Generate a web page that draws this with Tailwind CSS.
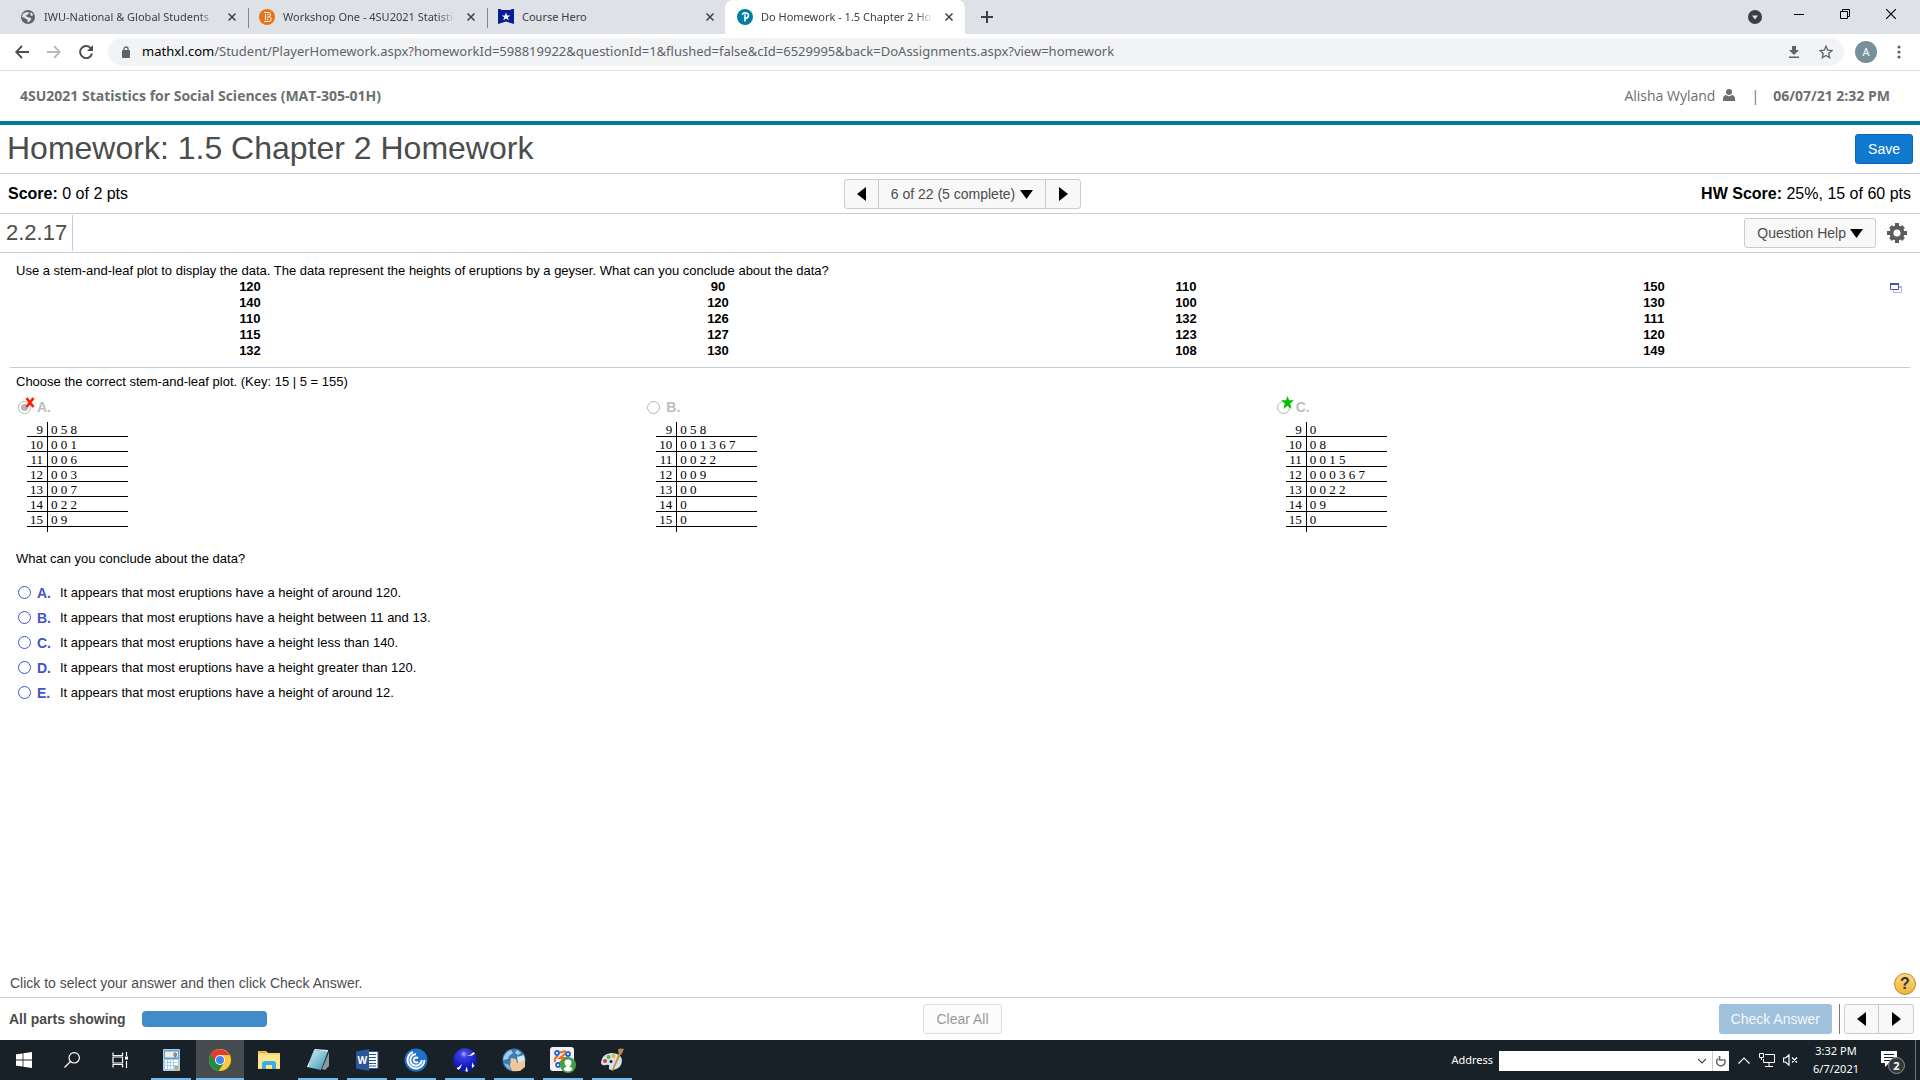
<!DOCTYPE html>
<html lang="en">
<head>
  <meta charset="UTF-8">
  <title>Do Homework - 1.5 Chapter 2 Homework</title>
  <meta name="viewport" content="width=device-width, initial-scale=1.0">
  <script src="https://cdn.jsdelivr.net/npm/@tailwindcss/browser@4"></script>
</head>
<body class="bg-white font-['Liberation_Sans',sans-serif] text-black min-h-screen flex flex-col">

  <!-- Browser tab strip -->
  <div class="flex h-[34px] bg-[#dee1e6] font-['Noto_Sans',sans-serif] text-[11px] text-[#3c4043]">
    <div class="flex items-center w-[248px] pl-5 pr-2 gap-2">
      <svg class="w-4 h-4 shrink-0" viewBox="0 0 16 16"><circle cx="8" cy="8" r="7" fill="#5f6368"/><path d="M3 4.500 6.500 3l3 .5L8 5.500 6 6.500l1 1.500 3 .5 1.500 1.500-2 2.500-2 1V11L5.500 9.500 2 8M11 3l2.500 3-2 1-1.500-1.500z" fill="#dee1e6"/></svg>
      <span class="w-[172px] overflow-hidden whitespace-nowrap mask-r-from-90%">IWU-National &amp; Global Students</span>
      <button aria-label="Close tab" class="w-4 h-4 flex items-center justify-center"><svg class="w-2 h-2" viewBox="0 0 8 8"><path d="M.5.5l7 7M7.500.5l-7 7" stroke="#3c4043" stroke-width="1.500"/></svg></button>
    </div>
    <div class="flex items-center w-[239px] pl-[11px] pr-2 gap-2 relative before:absolute before:left-0 before:top-2 before:h-5 before:w-px before:bg-[#80868b]">
      <svg class="w-4 h-4 shrink-0" viewBox="0 0 16 16"><circle cx="8" cy="8" r="8" fill="#ea7317"/><path d="M5 3.500h4a2 2 0 0 1 1 4 2.500 2.500 0 0 1-.5 5H5M6.500 5v6M8 5.500h1.500M8 8h2M8 10.500h1.500" fill="none" stroke="#fff"/></svg>
      <span class="w-[176px] overflow-hidden whitespace-nowrap mask-r-from-90%">Workshop One - 4SU2021 Statistics</span>
      <button aria-label="Close tab" class="w-4 h-4 flex items-center justify-center"><svg class="w-2 h-2" viewBox="0 0 8 8"><path d="M.5.5l7 7M7.500.5l-7 7" stroke="#3c4043" stroke-width="1.500"/></svg></button>
    </div>
    <div class="flex items-center w-[238px] pl-[11px] pr-[7px] gap-2 relative before:absolute before:left-0 before:top-2 before:h-5 before:w-px before:bg-[#80868b]">
      <svg class="w-4 h-4 shrink-0" viewBox="0 0 16 16"><path d="M0 0h2.500l1 1h9l1-1H16v15l-8-2.500L0 15z" fill="#0b1d96"/><path d="M8 3.500l1.200 3h3L9.800 8.300l.9 3L8 9.500l-2.700 1.800.9-3L3.800 6.500h3z" fill="#fff"/></svg>
      <span class="flex-1 whitespace-nowrap">Course Hero</span>
      <button aria-label="Close tab" class="w-4 h-4 flex items-center justify-center"><svg class="w-2 h-2" viewBox="0 0 8 8"><path d="M.5.5l7 7M7.500.5l-7 7" stroke="#3c4043" stroke-width="1.500"/></svg></button>
    </div>
    <div class="flex items-center w-[240px] pl-3 pr-2 gap-2 bg-white rounded-t-lg">
      <svg class="w-4 h-4 shrink-0" viewBox="0 0 16 16"><circle cx="8" cy="8" r="8" fill="#007fa3"/><path d="M5 5.500C7 3 11.500 3.500 11.500 6.500c0 2-2 3-4 2.500M8 5.500v7" fill="none" stroke="#fff" stroke-width="1.600"/></svg>
      <span class="w-[176px] overflow-hidden whitespace-nowrap mask-r-from-90%">Do Homework - 1.5 Chapter 2 Homework</span>
      <button aria-label="Close tab" class="w-4 h-4 flex items-center justify-center"><svg class="w-2 h-2" viewBox="0 0 8 8"><path d="M.5.5l7 7M7.500.5l-7 7" stroke="#3c4043" stroke-width="1.500"/></svg></button>
    </div>
    <button aria-label="New tab" class="w-11 flex items-center justify-center"><svg class="w-3 h-3" viewBox="0 0 12 12"><path d="M6 0v12M0 6h12" stroke="#3c4043" stroke-width="2"/></svg></button>
    <div class="ml-auto flex items-center">
      <button aria-label="Search tabs" class="w-[30px] flex justify-center"><svg class="w-[14px] h-[14px]" viewBox="0 0 14 14"><circle cx="7" cy="7" r="7" fill="#3c4043"/><path d="M4 5.500h6L7 9.500z" fill="#dee1e6"/></svg></button>
      <button aria-label="Minimize" class="w-[58px] h-[34px] pb-[6px] flex items-center justify-center"><svg class="w-[10px] h-[10px]" viewBox="0 0 10 10"><path d="M0 5.500h10" stroke="#000"/></svg></button>
      <button aria-label="Restore" class="w-[34px] h-[34px] pb-[6px] flex items-center justify-center"><svg class="w-[10px] h-[10px]" viewBox="0 0 10 10"><path d="M.5 2.500h7v7h-7zM2.500 2.500v-2h7v7h-2" fill="none" stroke="#000"/></svg></button>
      <button aria-label="Close" class="w-[58px] h-[34px] pb-[6px] flex items-center justify-center"><svg class="w-[10px] h-[10px]" viewBox="0 0 10 10"><path d="M0 0l10 10M10 0L0 10" stroke="#000" stroke-width="1.200"/></svg></button>
    </div>
  </div>

  <!-- Toolbar -->
  <div class="flex items-center h-[37px] border-b border-[#dadce0]">
    <button aria-label="Back" class="w-8 ml-[6px] flex justify-center"><svg class="w-[14px] h-[14px]" viewBox="0 0 14 14"><path d="M14 7H1.500M7 1L1.200 7 7 13" fill="none" stroke="#4a4d51" stroke-width="1.800"/></svg></button>
    <button aria-label="Forward" class="w-8 flex justify-center"><svg class="w-[14px] h-[14px]" viewBox="0 0 14 14"><path d="M0 7h12.500M7 1l5.800 6L7 13" fill="none" stroke="#b9bbbe" stroke-width="1.800"/></svg></button>
    <button aria-label="Reload" class="w-8 flex justify-center"><svg class="w-[14px] h-[14px]" viewBox="0 0 14 14"><path d="M12 3.500A6 6 0 1 0 13 8.500" fill="none" stroke="#4a4d51" stroke-width="1.900"/><path d="M14 0v6H8z" fill="#4a4d51"/></svg></button>
    <div class="flex-1 ml-[6px] h-7 bg-[#f1f3f4] rounded-full flex items-center pl-[13px] pr-[11px]">
      <svg class="w-[10px] h-3 mr-[11px]" viewBox="0 0 10 12"><rect y="4" x="1" width="8" height="8" rx="1" fill="#5f6368"/><path d="M3 5V3a2 2 0 0 1 4 0v2" fill="none" stroke="#5f6368" stroke-width="1.300"/></svg>
      <span class="font-['Noto_Sans',sans-serif] text-[13px] text-[#5f6368] whitespace-nowrap flex-1"><span class="text-black">mathxl.com</span>/Student/PlayerHomework.aspx?homeworkId=598819922&amp;questionId=1&amp;flushed=false&amp;cId=6529995&amp;back=DoAssignments.aspx?view=homework</span>
      <button aria-label="Downloads" class="mr-5"><svg class="w-[10px] h-[12px]" viewBox="0 0 10 12"><path d="M3 0h4v4h3L5 9 0 4h3zM0 10.500h10V12H0z" fill="#5f6368"/></svg></button>
      <button aria-label="Bookmark"><svg class="w-[14px] h-[14px]" viewBox="0 0 14 14"><path d="M7 1.200l1.700 4 4.300.4-3.300 2.900 1 4.200L7 10.500l-3.700 2.200 1-4.200L1 5.600l4.300-.4z" fill="none" stroke="#5f6368" stroke-width="1.300"/></svg></button>
    </div>
    <button class="ml-[11px] w-[22px] h-[22px] rounded-full bg-[#78909c] text-white text-[11px] font-['Noto_Sans',sans-serif]">A</button>
    <button aria-label="Menu" class="w-[43px] flex justify-center"><svg class="w-1 h-[14px]" viewBox="0 0 4 14"><g fill="#5f6368"><circle cx="2" cy="2" r="1.600"/><circle cx="2" cy="7" r="1.600"/><circle cx="2" cy="12" r="1.600"/></g></svg></button>
  </div>

  <!-- Course header -->
  <header class="flex items-center justify-between h-[54px] border-b-4 border-[#007a9c] pl-5 pr-[30px] pb-[2px] font-['Open_Sans',sans-serif] text-[14px] text-[#6a7070]">
    <span class="font-bold">4SU2021 Statistics for Social Sciences (MAT-305-01H)</span>
    <div class="flex items-center">
      <span>Alisha Wyland</span>
      <svg class="w-3 h-3 ml-2 mr-4" viewBox="0 0 12 12"><circle cx="6" cy="3" r="3" fill="#6a7070"/><path d="M0 12V9.500C0 7 2 6 3.200 6a4 4 0 0 0 5.600 0C10 6 12 7 12 9.500V12z" fill="#6a7070"/></svg>
      <span class="mr-[14px]">|</span>
      <span class="font-bold">06/07/21 2:32 PM</span>
    </div>
  </header>

  <!-- Assignment title -->
  <div class="flex items-center justify-between h-[49px] border-b border-[#c8cbdc] pl-[7px] pr-[7px]">
    <h1 class="text-[32px] leading-9 pb-[2px] text-[#4c4c4c]">Homework: 1.5 Chapter 2 Homework</h1>
    <button class="h-[30px] px-3 rounded-[3px] border border-[#0d66b5] bg-[#0f79d0] text-white text-[14px]">Save</button>
  </div>

  <div class="grid grid-cols-[1fr_auto_1fr] items-center h-10 border-b border-[#c8cbdc] pl-2 pr-[9px] text-[16px]">
    <span><b>Score:</b> 0 of 2 pts</span>
    <div class="flex h-[30px] ml-[6px] border border-[#ccc] rounded-[3px] bg-[#f8f8f8] text-[14px] text-[#4c4c4c] divide-x divide-[#ccc]">
      <button aria-label="Previous question" class="w-[34px] flex items-center justify-center"><svg class="w-[9px] h-[14px]" viewBox="0 0 9 14"><path d="M9 0v14L0 7z"/></svg></button>
      <button class="px-3 pt-px flex items-center gap-[5px]">6 of 22 (5 complete)<svg class="w-[13px] h-[9px]" viewBox="0 0 13 9"><path d="M0 0h13L6.500 9z"/></svg></button>
      <button aria-label="Next question" class="w-[34px] flex items-center justify-center"><svg class="w-[9px] h-[14px]" viewBox="0 0 9 14"><path d="M0 0v14l9-7z"/></svg></button>
    </div>
    <span class="text-right"><b>HW Score:</b> 25%, 15 of 60 pts</span>
  </div>

  <div class="flex items-center h-[39px] border-b border-[#c8cbdc] pr-[13px]">
    <h2 class="h-9 leading-9 w-[73px] pl-[6px] border-r border-[#c8cbdc] text-[22px] text-[#4c4c4c]">2.2.17</h2>
    <button class="ml-auto h-[30px] px-3 border border-[#ccc] rounded-[3px] bg-[#f8f8f8] text-[14px] text-[#4c4c4c] flex items-center gap-1">Question Help<svg class="w-[13px] h-[9px]" viewBox="0 0 13 9"><path d="M0 0h13L6.500 9z"/></svg></button>
    <button aria-label="Settings" class="ml-[11px] pb-px">
      <svg class="w-5 h-5" viewBox="0 0 20 20"><g fill="#5c5c5c"><path d="M8 0h4v4H8zM8 16h4v4H8zM0 8h4v4H0zM16 8h4v4h-4z"/><path d="M8 .8h4v4H8zM8 15.200h4v4H8zM.8 8h4v4h-4zM15.200 8h4v4h-4z" transform="rotate(45 10 10)"/></g><circle cx="10" cy="10" r="5.500" fill="none" stroke="#5c5c5c" stroke-width="4"/></svg>
    </button>
  </div>

  <!-- Question -->
  <main class="flex-1 pt-[10px] text-[13px] leading-4">
    <p class="px-4">Use a stem-and-leaf plot to display the data. The data represent the heights of eruptions by a geyser. What can you conclude about the data?</p>
    <div class="flex items-start gap-[2px] pl-4 pr-[18px]">
      <table class="flex-1 table-fixed w-full text-center font-bold">
        <tbody id="heights"></tbody>
      </table>
      <button aria-label="Open data in a new window" class="mt-1 shrink-0"><svg class="w-3 h-[10px]" viewBox="0 0 12 10"><path d="M3.500 3.500h8v6h-8z" fill="#fff" stroke="#b4b5de"/><path d="M3 3h9v2H3z" fill="#b4b5de"/><path d="M.5.5h8v6h-8z" fill="#fff" stroke="#4a55a5"/><path d="M0 0h9v2H0z" fill="#4a55a5"/></svg></button>
    </div>
    <hr class="mt-2 mx-[10px] border-[#c8cbdc]">

    <p class="mt-[6px] px-4">Choose the correct stem-and-leaf plot. (Key: 15 | 5 = 155)</p>
    <div id="plots" class="grid grid-cols-3 mt-[9px] px-4"></div>

    <p class="mt-[19px] px-4">What can you conclude about the data?</p>
    <div id="answers" class="mt-[13px] px-[18px]"></div>
  </main>

  <!-- Footer -->
  <div class="flex items-center justify-between h-7 pl-[10px] pr-1 border-b border-[#c8cbdc] text-[14px] text-[#4c4c4c]">
    <p>Click to select your answer and then click Check Answer.</p>
    <button aria-label="Help" class="w-[22px] h-[22px] rounded-full border border-[#b98d2e] bg-linear-to-b from-[#fbdc7c] to-[#efb23c] text-[16px] leading-5 font-bold text-[#333]">?</button>
  </div>
  <div class="grid grid-cols-[1fr_auto_1fr] items-center h-[42px] pl-[9px] pr-[6px] text-[14px] text-[#4c4c4c]">
    <div class="flex items-center gap-4">
      <span class="font-bold">All parts showing</span>
      <div class="w-[125px] h-4 rounded-[4px] bg-[#428bca]"></div>
    </div>
    <button disabled class="h-[30px] px-3 ml-[2px] border border-[#ddd] rounded-[3px] bg-[#fcfcfc] text-[#999]">Clear All</button>
    <div class="flex items-center justify-end">
      <button disabled class="h-[30px] px-3 rounded-[3px] bg-[#9fc1dc] text-[#f4f8fb]">Check Answer</button>
      <span class="w-px h-[30px] bg-[#777] ml-[7px] mr-1"></span>
      <div class="flex h-[30px] border border-[#ccc] rounded-[3px] bg-[#f8f8f8] divide-x divide-[#ccc]">
        <button aria-label="Previous" class="w-[34px] flex items-center justify-center"><svg class="w-[9px] h-[14px]" viewBox="0 0 9 14"><path d="M9 0v14L0 7z"/></svg></button>
        <button aria-label="Next" class="w-[34px] flex items-center justify-center"><svg class="w-[9px] h-[14px]" viewBox="0 0 9 14"><path d="M0 0v14l9-7z"/></svg></button>
      </div>
    </div>
  </div>

  <!-- Windows taskbar -->
  <footer class="flex h-10 bg-[#182127] text-white font-['Noto_Sans',sans-serif] text-[11px]">
    <button aria-label="Start" class="w-12 flex items-center justify-center"><svg class="w-4 h-4" viewBox="0 0 16 16"><path d="M0 2.300l6.600-.9v6.200H0zM7.400 1.200L16 0v7.600H7.400zM0 8.400h6.600v6.200L0 13.700zM7.400 8.400H16V16l-8.600-1.200z" fill="#fff"/></svg></button>
    <button aria-label="Search" class="w-12 flex items-center justify-center"><svg class="w-4 h-4" viewBox="0 0 16 16"><circle cx="10.200" cy="5.800" r="5.200" fill="none" stroke="#fff" stroke-width="1.200"/><path d="M6.500 9.500L.5 15.500" stroke="#fff" stroke-width="1.300"/></svg></button>
    <button aria-label="Task view" class="w-12 mr-[3px] flex items-center justify-center"><svg class="w-4 h-4" viewBox="0 0 16 16"><g fill="none" stroke="#fff"><path d="M1 .5v3h9.500v-3M1 15.500v-3h9.500v3M1 5h9.500v6H1z" stroke-width="1.200"/><path d="M14.500 0v4M14.500 9v7" stroke-width="1.200"/></g><path d="M13 4.500h3v3h-3z" fill="#fff"/></svg></button>
    <div class="flex gap-px">
      <button aria-label="Calculator" class="w-12 flex items-center justify-center relative after:absolute after:bottom-0 after:inset-x-1 after:h-[2px] after:bg-[#76b9ed]">
        <svg class="w-6 h-6" viewBox="0 0 24 24"><rect x="4" y="1" width="17" height="22" rx="1" fill="#a9cfe9"/><rect x="5" y="2" width="15" height="9" fill="#5b9fd4"/><rect x="6" y="3.500" width="13" height="6" fill="#f5ecd5"/><path d="M15 5h2v3h-2v-3M17 5v4h-2" stroke="#5b7690" fill="none"/><g fill="#fff"><path d="M6 12h2v2H6zM9 12h2v2H9zM12 12h2v2h-2zM15 12h4v2h-4zM6 15h2v2H6zM9 15h2v2H9zM12 15h2v2h-2zM15 15h4v2h-4zM6 18h2v3H6zM9 18h2v3H9zM12 18h2v3h-2z"/></g><path d="M16 18h3v3.500h-3z" fill="#f39a2d"/></svg>
      </button>
      <button aria-label="Chrome" class="w-12 flex items-center justify-center bg-[#464d51] relative after:absolute after:bottom-0 after:inset-x-0 after:h-[2px] after:bg-[#76b9ed]">
        <svg class="w-[22px] h-[22px]" viewBox="0 0 22 22"><circle cx="11" cy="11" r="11" fill="#fcc934"/><path d="M11 11L1.500 5.500A11 11 0 0 0 9.500 21.900L15.500 13z" fill="#1e8e3e"/><path d="M11 11L6.600 13.500 1.500 5.500A11 11 0 0 1 20.500 6H11z" fill="#e33b2e"/><circle cx="11" cy="11" r="5" fill="#fff"/><circle cx="11" cy="11" r="4" fill="#4285f4"/></svg>
      </button>
      <button aria-label="File Explorer" class="w-12 flex items-center justify-center">
        <svg class="w-6 h-6" viewBox="0 0 24 24"><path d="M1 3h8l2 2h12v16H1z" fill="#f7d774"/><path d="M1 7h22v13H1z" fill="#fde68e"/><path d="M2 3.500h7v1.500H2z" fill="#e5a823"/><path d="M5 21v-5q0-3 3-3h8q3 0 3 3v5h-4v-4H9v4z" fill="#35b0e8"/></svg>
      </button>
      <button aria-label="Notepad" class="w-12 flex items-center justify-center relative after:absolute after:bottom-0 after:inset-x-1 after:h-[2px] after:bg-[#76b9ed]">
        <svg class="w-6 h-6" viewBox="0 0 24 24"><defs><linearGradient id="note" x1="0" y1="0" x2="1" y2="1"><stop stop-color="#d9f2f7"/><stop offset="1" stop-color="#2f96ae"/></linearGradient></defs><path d="M16 21l7-17v14l-4 4z" fill="#8c9aa0"/><path d="M8 2l14 1-7 19-14-3z" fill="url(#note)"/><path d="M8 2l1-1 13 1v1.500z" fill="#e8eef0"/><path d="M1 19l3-6-1.500 6z" fill="#fff"/></svg>
      </button>
      <button aria-label="Word" class="w-12 flex items-center justify-center relative after:absolute after:bottom-0 after:inset-x-1 after:h-[2px] after:bg-[#76b9ed]">
        <svg class="w-6 h-6" viewBox="0 0 24 24"><path d="M13 3.500h10v17H13z" fill="#fff" stroke="#2b579a"/><path d="M14 6.500h7M14 9.500h7M14 12.500h7M14 15.500h7M14 18h7" stroke="#2b579a"/><path d="M1 3.500L14 1v22L1 20.500z" fill="#2b579a"/><text x="2.500" y="16" font-size="10" font-weight="bold" fill="#fff">W</text></svg>
      </button>
      <button aria-label="Citrix" class="w-12 flex items-center justify-center relative after:absolute after:bottom-0 after:inset-x-1 after:h-[2px] after:bg-[#76b9ed]">
        <svg class="w-6 h-6" viewBox="0 0 24 24"><circle cx="12" cy="12" r="11.500" fill="#1f70c8"/><g fill="none" stroke="#fff" stroke-width="2"><path d="M9 4A8.500 8.500 0 1 0 20.500 12M12 3.500"/><path d="M12 6.300A5.700 5.700 0 1 0 17.700 12"/><path d="M14 10.300a2.500 2.500 0 1 0 0 3.400"/></g></svg>
      </button>
      <button aria-label="Sphere" class="w-12 flex items-center justify-center relative after:absolute after:bottom-0 after:inset-x-1 after:h-[2px] after:bg-[#76b9ed]">
        <svg class="w-6 h-6" viewBox="0 0 24 24"><defs><radialGradient id="ball" cx="0.45" cy="0.25" r="0.6"><stop offset="0" stop-color="#b9a8ff"/><stop offset="0.25" stop-color="#3f3fe8"/><stop offset="1" stop-color="#0d18b0"/></radialGradient></defs><circle cx="12" cy="12" r="11.800" fill="url(#ball)"/><path d="M14 8q4-1 6.500-4l1.500 1.500q-3 3-8 2.500zM3.500 20q3-1 5.500-4-1 4-3.500 6zM12.500 23.500q0-3 1.500-5 0 3 1 5zM19 20q-.5-3 .5-6 0 2 2 4z" fill="#fff"/></svg>
      </button>
      <button aria-label="Globe" class="w-12 flex items-center justify-center relative after:absolute after:bottom-0 after:inset-x-1 after:h-[2px] after:bg-[#76b9ed]">
        <svg class="w-6 h-6" viewBox="0 0 24 24"><circle cx="12" cy="12" r="11.500" fill="#3c7bb3"/><path d="M2 8q3-5 7-6l2 3-4 3-1 3-5 1zM15 2l4 3-3 2-3-2z" fill="#a5cbe2"/><path d="M9 10l5 1 1 4 8-2v6l-5 4h-8l-2-5z" fill="#f3c794"/><path d="M15 9l7-2 1 6-7 2z" fill="#dbe6ea"/><path d="M2 15l5 2 2 5q-5-2-7-7z" fill="#8fc0de"/></svg>
      </button>
      <button aria-label="Network app" class="w-12 flex items-center justify-center relative after:absolute after:bottom-0 after:inset-x-1 after:h-[2px] after:bg-[#76b9ed]">
        <svg class="w-[26px] h-[26px]" viewBox="0 0 26 26"><rect width="24" height="24" rx="3" fill="#f1f2f5"/><path d="M8 9q-4 2-3 6M8 6l8-2M16 6l-6 5h7M9 17l5-6" fill="none" stroke="#f46c1b" stroke-width="2"/><g fill="#fff" stroke="#2463d4" stroke-width="1.800"><circle cx="7" cy="6" r="2"/><circle cx="18" cy="7" r="2"/><circle cx="8" cy="18" r="2"/></g><circle cx="18" cy="18" r="8" fill="#43a047"/><path d="M13.500 22.500q.5-2.500 3.200-3-2.200-1-2.200-3.700 0-3.300 3.500-3.300t3.500 3.300q0 2.700-2.200 3.700 2.700.5 3.200 3-2 2-4.500 2t-4.500-2z" fill="#fff"/></svg>
      </button>
      <button aria-label="Paint" class="w-12 flex items-center justify-center relative after:absolute after:bottom-0 after:inset-x-1 after:h-[2px] after:bg-[#76b9ed]">
        <svg class="w-6 h-6" viewBox="0 0 24 24"><path d="M1 14q1-8 10-9 10 0 11 7 0 9-10 10-4 0-3-3 1-3-3-2-5 1-5-3z" fill="#cfe3f0"/><circle cx="5" cy="13" r="2" fill="#dd3c33"/><circle cx="8.500" cy="9" r="2" fill="#59b146"/><circle cx="13.500" cy="8" r="2" fill="#f1b62f"/><circle cx="11" cy="13.500" r="1.500" fill="#182127"/><path d="M19 5l2 1-8 17-1.500-.5z" fill="#e08a2c"/><path d="M18 1q3-1 6 0l-2.500 5.500L18.500 5z" fill="#b98560"/></svg>
      </button>
    </div>

    <div class="ml-auto flex items-center">
      <label for="address" class="mr-[6px]">Address</label>
      <div class="flex w-[230px] h-5 mt-[2px] bg-white">
        <input id="address" type="text" class="flex-1 min-w-0 text-black outline-none">
        <button aria-label="Show addresses" class="w-5 flex items-center justify-center"><svg class="w-2 h-[6px]" viewBox="0 0 8 6"><path d="M0 1l4 4 4-4" fill="none" stroke="#444" stroke-width="1.200"/></svg></button>
        <button aria-label="Refresh" class="w-[17px] border-l border-[#ccc] flex items-center justify-center"><svg class="w-[10px] h-3" viewBox="0 0 10 12"><path d="M1.800 3.800A4.200 4.200 0 1 0 8.200 4.200M3.500 1v4H7.500" fill="none" stroke="#666" stroke-width="1.600"/></svg></button>
      </div>
      <button aria-label="Show hidden icons" class="w-[29px] flex justify-center"><svg class="w-3 h-[7px]" viewBox="0 0 12 7"><path d="M.5 6.500L6 1l5.500 5.500" fill="none" stroke="#fff" stroke-width="1.200"/></svg></button>
      <button aria-label="Network" class="ml-px w-4"><svg class="w-4 h-[14px]" viewBox="0 0 16 14"><path d="M6 1.500h9.500v8H4.500V6M10 9.500v4M6 13.500h8M.5.5h4v4h-4zM2.500 4.500v2.500" fill="none" stroke="#fff"/></svg></button>
      <button aria-label="Volume" class="ml-2 w-[15px]"><svg class="w-[15px] h-3" viewBox="0 0 15 12"><path d="M.5 4h2L6 .8v10.400L2.500 8h-2zM9 3.500l5 5M14 3.500l-5 5" fill="none" stroke="#fff" stroke-width="1.200"/></svg></button>
      <div class="w-[76px] text-center leading-[18px]">3:32 PM<br>6/7/2021</div>
      <button aria-label="2 notifications" class="relative w-6 h-6 ml-[6px] mr-[11px]">
        <svg class="w-6 h-6" viewBox="0 0 24 24"><path d="M1 3h16v12H9l-4 4v-4H1z" fill="#fff"/><path d="M4 6.500h10M4 9.500h10M4 12.500h7" stroke="#182127"/></svg>
        <span class="absolute left-2 top-[9px] w-[17px] h-[17px] rounded-full border border-[#8b9094] bg-[#33383b] leading-[15px] text-[11px] font-bold">2</span>
      </button>
      <span class="w-px h-10 bg-[#6d7377] mr-1"></span>
    </div>
  </footer>

  <script>
    const heights = [
      [120, 90, 110, 150],
      [140, 120, 100, 130],
      [110, 126, 132, 111],
      [115, 127, 123, 120],
      [132, 130, 108, 149]
    ];

    const stems = [9, 10, 11, 12, 13, 14, 15];
    const plots = [
      { letter: "A", mark: "wrong", leaves: ["0 5 8", "0 0 1", "0 0 6", "0 0 3", "0 0 7", "0 2 2", "0 9"] },
      { letter: "B", mark: "", leaves: ["0 5 8", "0 0 1 3 6 7", "0 0 2 2", "0 0 9", "0 0", "0", "0"] },
      { letter: "C", mark: "right", leaves: ["0", "0 8", "0 0 1 5", "0 0 0 3 6 7", "0 0 2 2", "0 9", "0"] }
    ];

    const answers = [
      "It appears that most eruptions have a height of around 120.",
      "It appears that most eruptions have a height between 11 and 13.",
      "It appears that most eruptions have a height less than 140.",
      "It appears that most eruptions have a height greater than 120.",
      "It appears that most eruptions have a height of around 12."
    ];

    // Marks drawn over the radio once the part has been graded
    const marks = {
      wrong: `<svg class="absolute left-[7px] -top-[2px] w-[10px] h-[11px]" viewBox="0 0 10 11"><path d="M1.500 1l7 9M8.500 1l-7 9" stroke="#ff1a00" stroke-width="2.600"/></svg>`,
      right: `<svg class="absolute left-1 -top-[3px] w-[13px] h-[13px]" viewBox="0 0 12 12"><path d="M6 0l1.500 4H12L8.500 7l1.300 5L6 9l-3.800 3 1.300-5L0 4h4.500z" fill="#00c000"/></svg>`,
      "": ""
    };

    document.getElementById("heights").innerHTML = heights.map(row =>
      `<tr>${row.map(n => `<td class="h-4">${n}</td>`).join("")}</tr>`
    ).join("");

    document.getElementById("plots").innerHTML = plots.map(p => `
      <div class="pl-[2px]">
        <label class="relative flex items-center gap-[6px] h-4 text-[14px] font-bold text-[#bdbdbd]">
          <input type="radio" name="plot" disabled ${p.mark === "wrong" ? "checked" : ""} class="appearance-none w-[13px] h-[13px] rounded-full border border-[#b5b5b5] bg-white p-[2px] bg-clip-content checked:bg-[#b5b5b5]">
          ${marks[p.mark]}${p.letter}.
        </label>
        <table class="mt-[7px] ml-[9px] border-separate border-spacing-0 font-['Liberation_Serif',serif] text-[13px] leading-[13px]">
          <tbody>
            ${stems.map((s, i) => `
              <tr>
                <td class="w-[21px] pt-px pr-1 text-right border-r border-b border-black">${s}</td>
                <td class="w-20 pt-px pl-[3px] border-b border-black">${p.leaves[i]}</td>
              </tr>`).join("")}
            <tr><td class="h-[5px] border-r border-black"></td><td></td></tr>
          </tbody>
        </table>
      </div>
    `).join("");

    document.getElementById("answers").innerHTML = answers.map((text, i) => `
      <label class="flex items-center h-[25px]">
        <input type="radio" name="answer" class="appearance-none w-[13px] h-[13px] rounded-full border border-[#3f55c8] bg-white p-[2px] bg-clip-content checked:bg-[#3f55c8]">
        <span class="w-[23px] ml-[6px] text-[14px] font-bold text-[#3f55c8]">${"ABCDE"[i]}.</span>
        <span>${text}</span>
      </label>
    `).join("");
  </script>
</body>
</html>
